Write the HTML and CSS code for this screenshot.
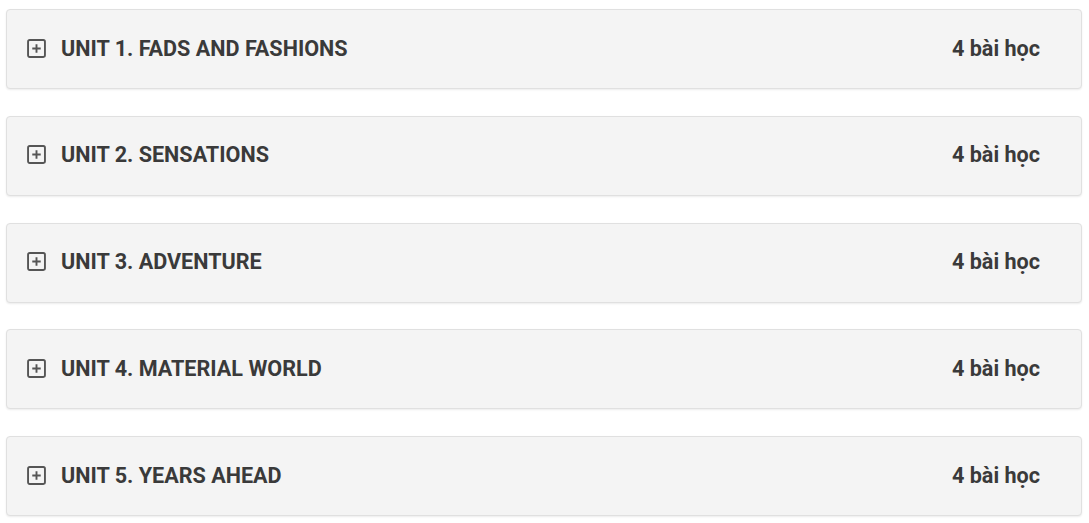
FILE: index.html
```html
<!DOCTYPE html>
<html lang="vi">

<head>
    <meta charset="UTF-8">
    <meta name="viewport" content="width=device-width, initial-scale=1.0">
    <title>Danh sách bài học</title>
    <link rel="stylesheet" href="styles.css">
</head>

<body>

    <div class="course-list">
        <!-- Unit 1 -->
        <div class="unit">
            <div class="unit-title">
                <svg class="unit-icon" viewBox="0 0 18 18"><rect x="1" y="1" width="16" height="16" rx="1.5"/><path d="M9 5v8M5 9h8"/></svg>
                <span>UNIT 1. FADS AND FASHIONS</span>
            </div>
            <div class="unit-count">4 bài học</div>
        </div>

        <!-- Unit 2 -->
        <div class="unit">
            <div class="unit-title">
                <svg class="unit-icon" viewBox="0 0 18 18"><rect x="1" y="1" width="16" height="16" rx="1.5"/><path d="M9 5v8M5 9h8"/></svg>
                <span>UNIT 2. SENSATIONS</span>
            </div>
            <div class="unit-count">4 bài học</div>
        </div>

        <!-- Unit 3 -->
        <div class="unit">
            <div class="unit-title">
                <svg class="unit-icon" viewBox="0 0 18 18"><rect x="1" y="1" width="16" height="16" rx="1.5"/><path d="M9 5v8M5 9h8"/></svg>
                <span>UNIT 3. ADVENTURE</span>
            </div>
            <div class="unit-count">4 bài học</div>
        </div>

        <!-- Unit 4 -->
        <div class="unit">
            <div class="unit-title">
                <svg class="unit-icon" viewBox="0 0 18 18"><rect x="1" y="1" width="16" height="16" rx="1.5"/><path d="M9 5v8M5 9h8"/></svg>
                <span>UNIT 4. MATERIAL WORLD</span>
            </div>
            <div class="unit-count">4 bài học</div>
        </div>

        <!-- Unit 5 -->
        <div class="unit">
            <div class="unit-title">
                <svg class="unit-icon" viewBox="0 0 18 18"><rect x="1" y="1" width="16" height="16" rx="1.5"/><path d="M9 5v8M5 9h8"/></svg>
                <span>UNIT 5. YEARS AHEAD</span>
            </div>
            <div class="unit-count">4 bài học</div>
        </div>
    </div>

</body>

</html>
```

FILE: styles.css
```css
body {
    font-family: 'Roboto', 'Liberation Sans', sans-serif;
    background-color: #fff;
    margin: 0;
    padding: 0;
    color: #3a3a3a;
}

.course-list {
    padding: 9px 7px 0 6px;
}

.unit {
    height: 76px;
    background-color: #f4f4f4;
    border: 1px solid #e0e0e0;
    border-radius: 4px;
    box-shadow: 0 1px 2px rgba(0, 0, 0, 0.08);
    margin-bottom: 26.75px;
    padding: 0 41px 2px 20px;
    display: flex;
    align-items: center;
    justify-content: space-between;
}

.unit-title {
    display: flex;
    align-items: center;
    font-size: 21.6px;
    font-weight: 700;
}

.unit-icon {
    width: 19px;
    height: 19px;
    margin-right: 15px;
    fill: none;
    stroke: #555;
    stroke-width: 1.8;
}

.unit-count {
    font-size: 21.6px;
    font-weight: 700;
}
```
